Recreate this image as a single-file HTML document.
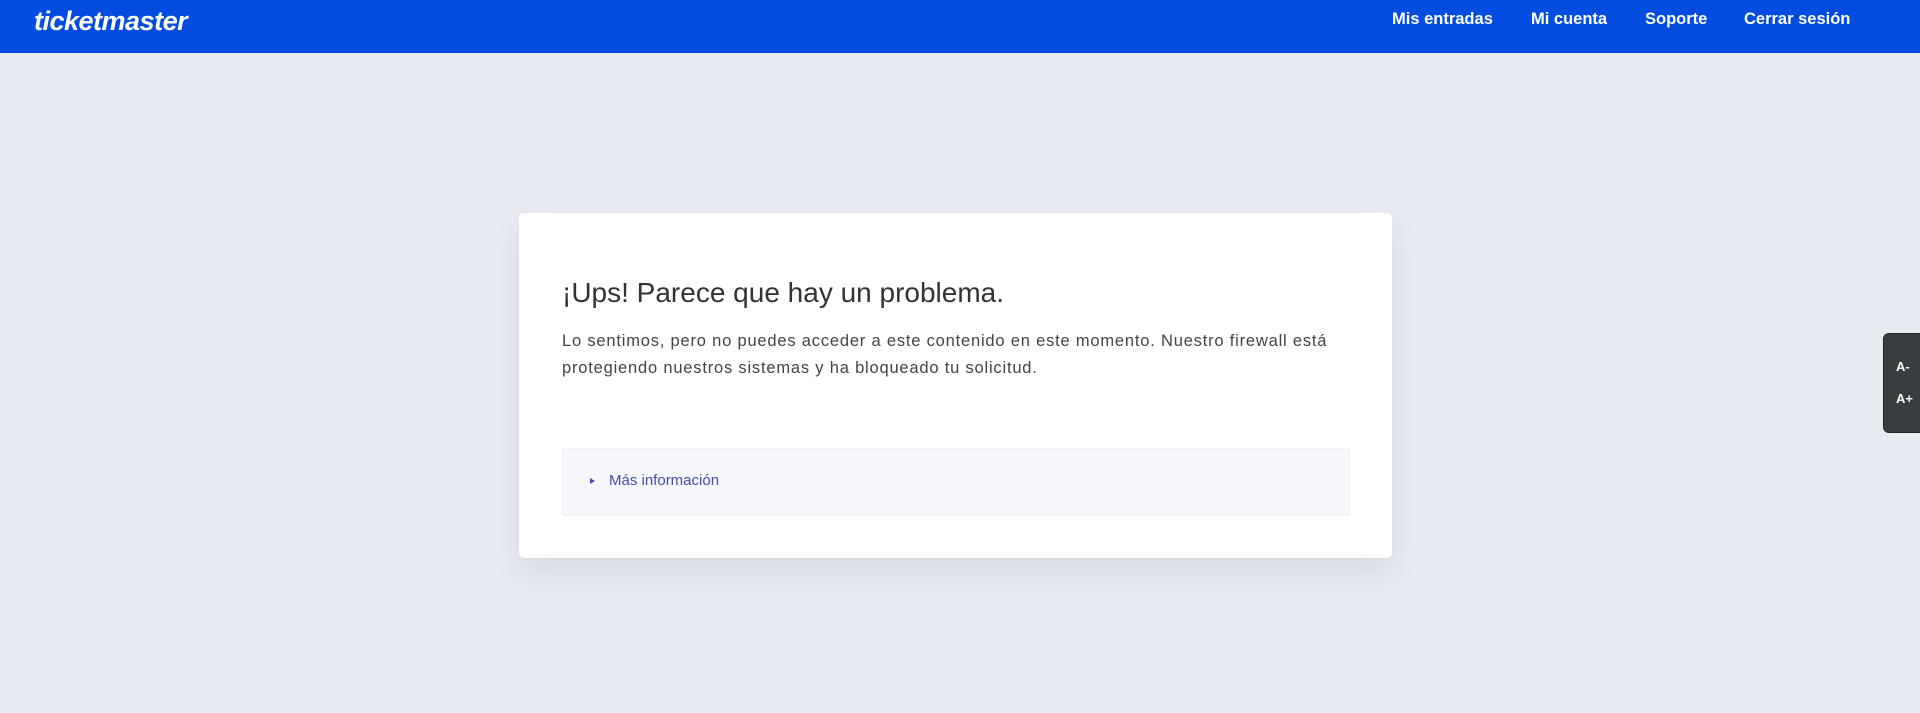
<!DOCTYPE html>
<html><head><meta charset="utf-8"><style>
body{margin:0;width:1920px;height:713px;background:#e9ebf3;font-family:"Liberation Sans",sans-serif;position:relative;overflow:hidden}
.hdr{position:absolute;left:0;top:0;width:1920px;height:53px;background:#024ddf}
.logo{position:absolute;left:34px;top:6px;color:#fff;font-weight:bold;font-style:italic;font-size:27px;letter-spacing:-0.5px}
.nav a{position:absolute;top:10px;color:#fff;font-size:16.5px;font-weight:bold;text-decoration:none}
.card{position:absolute;left:519px;top:213px;width:873px;height:345px;background:#fff;border-radius:5px;box-shadow:0 14px 30px rgba(0,0,0,0.08)}
h1{position:absolute;left:43px;top:64px;margin:0;font-weight:normal;font-size:28px;color:#333}
p{position:absolute;left:43px;top:115px;margin:0;width:800px;font-size:16.5px;line-height:27px;color:#444;letter-spacing:0.8px}
.info{position:absolute;left:43px;top:235px;width:786px;height:66px;background:#f6f7fa;border:1px solid #eef0f4}
.info span{position:absolute;left:46px;top:23px;color:#4a4aa8;font-size:15px}
.info i{position:absolute;left:27px;top:29px;width:0;height:0;border-left:5px solid #4a4aa8;border-top:3px solid transparent;border-bottom:3px solid transparent}
.fs{position:absolute;left:1883px;top:333px;width:45px;height:98px;background:#3a3d40;border-radius:6px;border:1px solid #222;color:#fff;font-weight:bold;font-size:13px}
.fs div{position:absolute;left:12px}
</style></head><body>
<div class="hdr"><div class="logo">ticketmaster</div>
<div class="nav"><a style="left:1392px">Mis entradas</a><a style="left:1531px">Mi cuenta</a><a style="left:1645px">Soporte</a><a style="left:1744px">Cerrar sesión</a></div></div>
<div class="card"><h1>¡Ups! Parece que hay un problema.</h1>
<p>Lo sentimos, pero no puedes acceder a este contenido en este momento. Nuestro firewall está protegiendo nuestros sistemas y ha bloqueado tu solicitud.</p>
<div class="info"><i></i><span>Más información</span></div></div>
<div class="fs"><div style="top:25px">A-</div><div style="top:57px">A+</div></div>
</body></html>
